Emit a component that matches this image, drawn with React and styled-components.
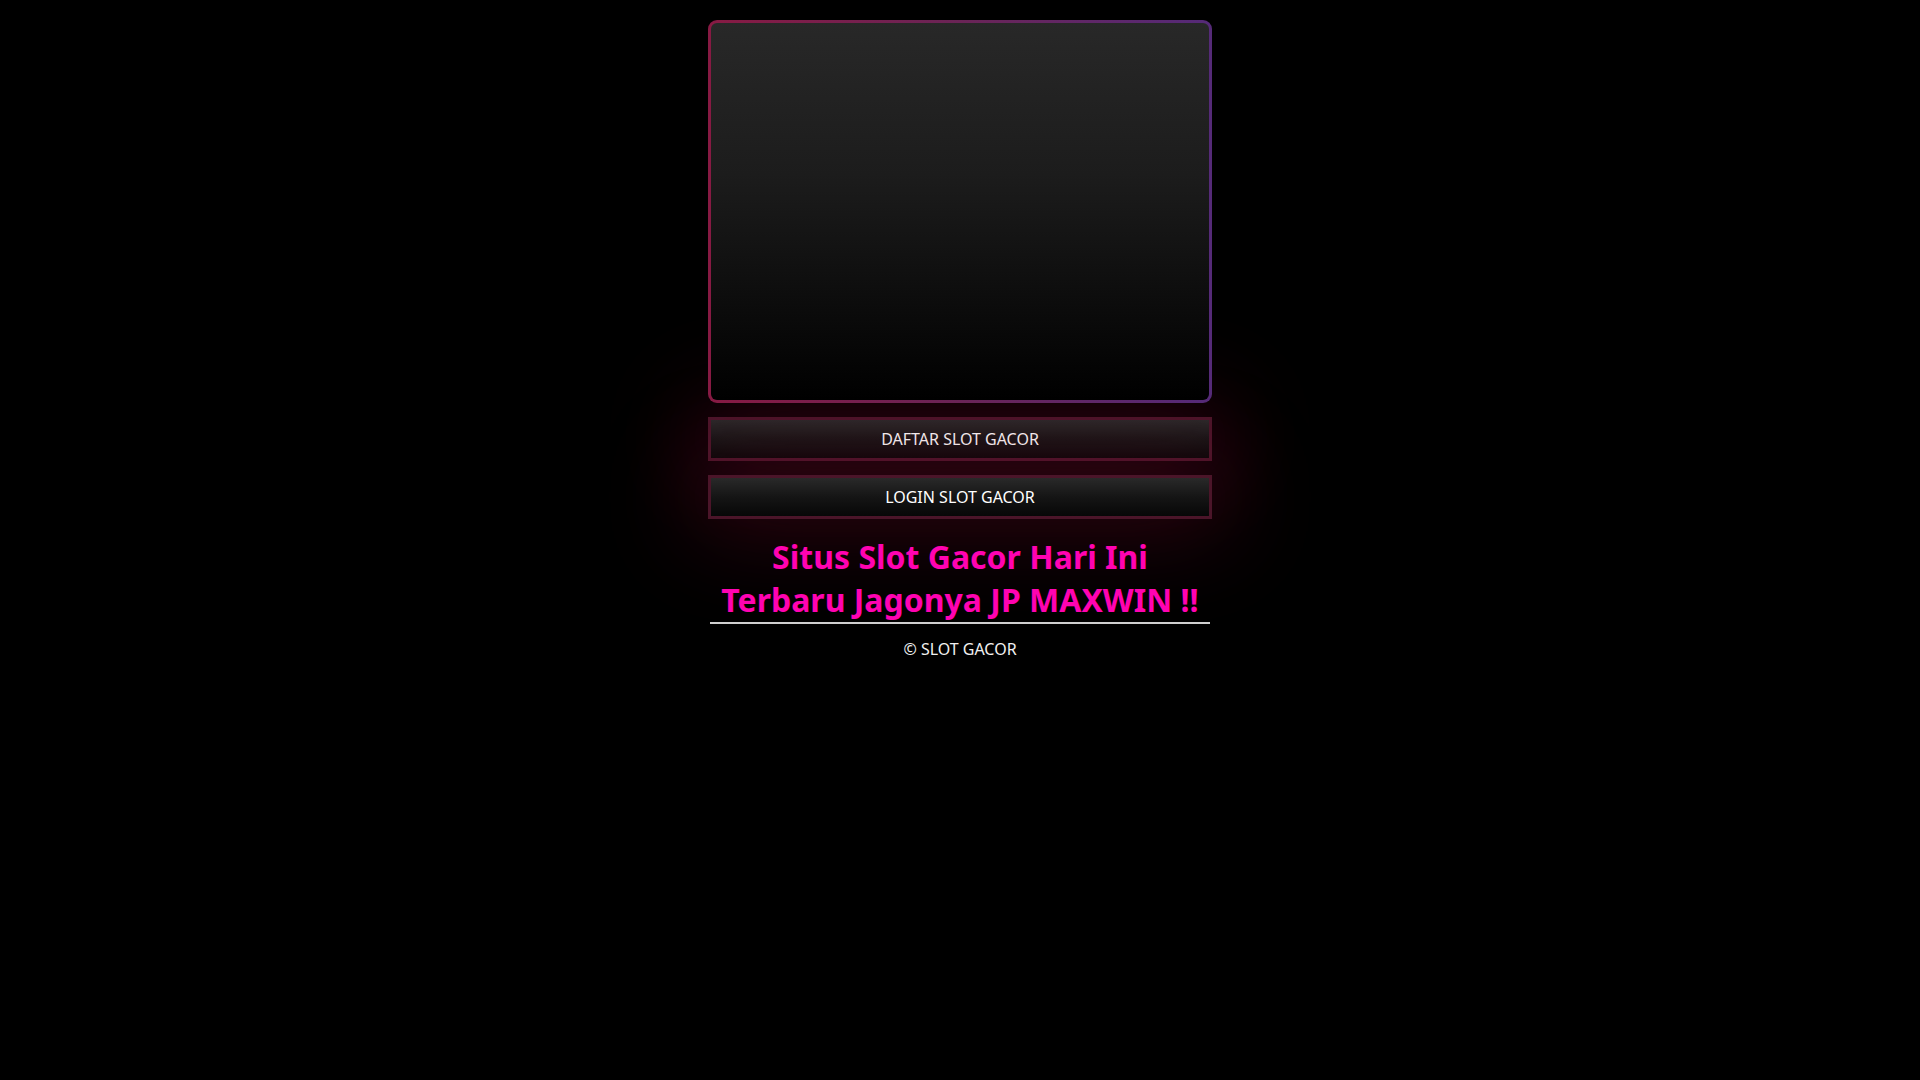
import styled, { createGlobalStyle } from "styled-components";

const GlobalStyle = createGlobalStyle`
  html, body {
    margin: 0;
    padding: 0;
    background: #000;
    color: #fff;
    font-family: "Noto Sans", "Open Sans", sans-serif;
  }
`;

const Page = styled.div`
  width: 504px;
  margin: 0 auto;
  padding-top: 20px;
  display: flex;
  flex-direction: column;
`;

const Banner = styled.div`
  position: relative;
  z-index: 1;
  height: 383px;
  box-sizing: border-box;
  border: 3px solid transparent;
  border-radius: 9px;
  background:
    linear-gradient(180deg, #282828 0%, #1c1c1c 40%, #000 100%) padding-box,
    linear-gradient(90deg, #871a43 0%, #6a2456 50%, #552a78 100%) border-box;
`;

const Buttons = styled.div`
  display: flex;
  flex-direction: column;
  gap: 14px;
  margin-top: 14px;
`;

const Button = styled.a`
  display: flex;
  align-items: center;
  justify-content: center;
  height: 44px;
  box-sizing: border-box;
  border: 3px solid #4b1529;
  background: linear-gradient(180deg, #292929 0%, #151515 50%, #070707 100%);
  box-shadow: 0 0 95px 18px rgba(120, 12, 48, 0.32);
  color: #fff;
  font-size: 16px;
  text-decoration: none;
  cursor: pointer;
`;

const Title = styled.h1`
  margin: 17px 2px 0;
  font-size: 32px;
  font-weight: 700;
  line-height: 1.34;
  text-align: center;
  color: #ff03b1;
  border-bottom: 2px solid #cfcfcf;
`;

const Footer = styled.p`
  margin: 14px 0 0;
  font-size: 16px;
  text-align: center;
  color: #f0f0f0;
`;

const App = () => {
  return (
    <>
      <GlobalStyle />
      <Page>
        <Banner />
        <Buttons>
          <Button>DAFTAR SLOT GACOR</Button>
          <Button>LOGIN SLOT GACOR</Button>
        </Buttons>
        <Title>
          Situs Slot Gacor Hari Ini
          <br />
          Terbaru Jagonya JP MAXWIN !!
        </Title>
        <Footer>© SLOT GACOR</Footer>
      </Page>
    </>
  );
};

export default App;
